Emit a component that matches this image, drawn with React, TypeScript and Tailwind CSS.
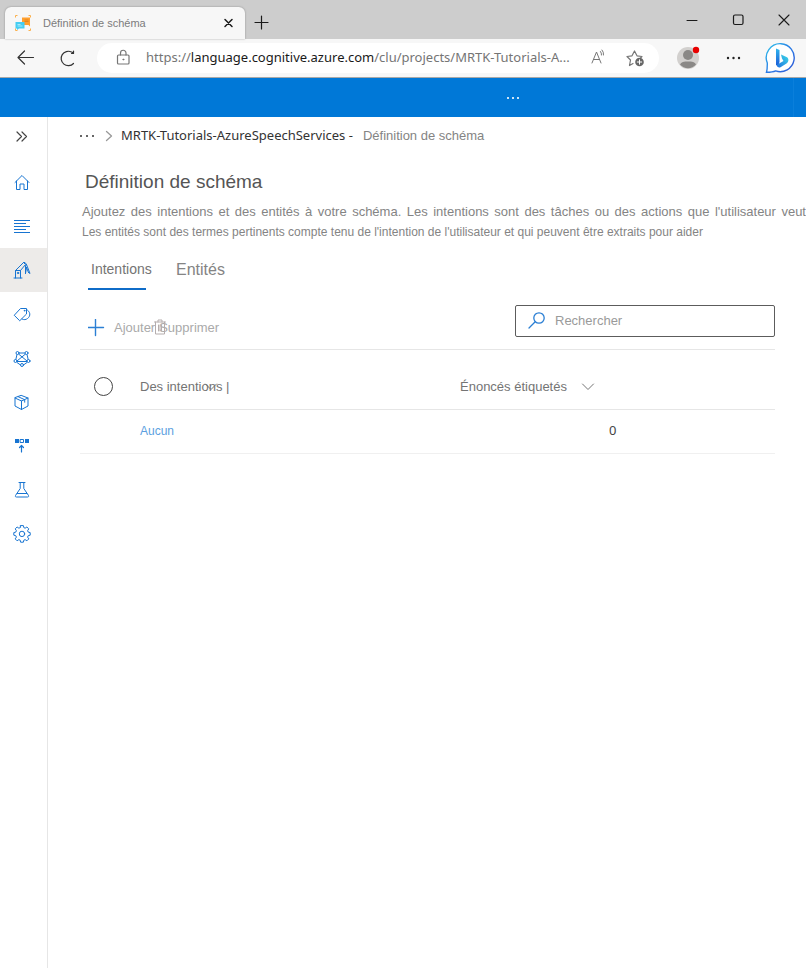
import React from "react";

const ui = "font-['Liberation_Sans',Arial,sans-serif]";
const segoe = "font-['Noto_Sans','Open_Sans',sans-serif]";

type IconProps = { className?: string; children: React.ReactNode; box?: string };

function Icon({ className = "size-[18px]", children, box = "0 0 18 18" }: IconProps) {
  return (
    <svg
      viewBox={box}
      className={`shrink-0 ${className}`}
      fill="none"
      stroke="currentColor"
      strokeWidth="1"
      strokeLinecap="round"
      strokeLinejoin="round"
      aria-hidden="true"
    >
      {children}
    </svg>
  );
}

function TabFavicon() {
  return (
    <svg viewBox="0 0 16 16" className="size-4 shrink-0" aria-hidden="true">
      <path d="M.5 2.500v-2h2M13.500.500h2v2M.500 13.500v2h2M13.500 15.500h2v-2" fill="none" stroke="#fbb04c" />
      <path d="M7 2.500h8v9l-1.500-1.500H7z" fill="#ff9f2e" />
      <path d="M9.500 5h4M9.500 6.500h4" stroke="#d97a12" strokeWidth=".7" />
      <path d="M.5 7h9v6.500H4l-2 1.500v-1.500H.5z" fill="#45cdf2" />
      <path d="M2.500 9.500h3M2.500 11h5" stroke="#c2f1fc" strokeWidth=".8" />
    </svg>
  );
}

function BingLogo() {
  return (
    <svg viewBox="0 0 32 32" className="size-8 shrink-0" aria-hidden="true">
      <defs>
        <linearGradient id="bingRing" x1="0" y1="0" x2="1" y2="1">
          <stop offset="0" stopColor="#2fc4ea" />
          <stop offset=".5" stopColor="#2b7de6" />
          <stop offset="1" stopColor="#2f55d4" />
        </linearGradient>
        <linearGradient id="bingStem" x1="0" y1="0" x2="0" y2="1">
          <stop offset="0" stopColor="#2fb6ee" />
          <stop offset="1" stopColor="#1a56d6" />
        </linearGradient>
        <linearGradient id="bingBowl" x1="0" y1="1" x2="1" y2="0">
          <stop offset="0" stopColor="#1f6fe0" />
          <stop offset="1" stopColor="#3ddbe8" />
        </linearGradient>
      </defs>
      <path
        d="M17 1.700a14 14 0 1 1-5.400 27.200C9 30.200 6 30.300 2.500 30.300 3.400 27.500 3.300 25 3.300 21A14 14 0 0 1 17 1.700z"
        fill="#fff"
        stroke="url(#bingRing)"
        strokeWidth="1.400"
      />
      <path d="M12 6.500l3.500 1.500v12l-1.500 4.500-2-2z" fill="url(#bingStem)" />
      <path d="M17 12.500l5.500 2.500c2.600 1.200 2.500 4.800 0 6.500l-6 3.700c-1.500.8-3.500 0-4-2.200l7-4-1.500-2.500z" fill="url(#bingBowl)" />
    </svg>
  );
}

const navItems = [
  {
    label: "Accueil",
    icon: <path d="M2 9.500l7-7 7 7M3.500 8v8.500H7v-5.500h4v5.500h3.500V8" />,
  },
  {
    label: "Projets",
    icon: (
      <path d="M1 3.500h16M1 6.500h12M1 9.500h16M1 12.500h12M1 15.500h16" strokeLinecap="butt" strokeWidth="1.200" />
    ),
  },
  {
    label: "Définition de schéma",
    active: true,
    icon: (
      <>
        <path d="M1 17h8M2.500 17V9.500h5V17M2.500 9.500l1.500-1.500L10.500 1.500l2 2L7.500 9.500M10.500 1.500h1.500l1.500 2-1 1.500M13.500 3.500L17 12.500l-1.500-1M12.500 5v7.500M13.500 6.500l2 5M13.500 6.500l-1 6" />
        <circle cx="5" cy="12" r=".7" />
      </>
    ),
  },
  {
    label: "Étiquetage des données",
    icon: (
      <>
        <path d="M1.500 10L7.500 3.500h6V9L7 15.500z" />
        <path d="M13.500 4.500c4 2 4.500 6.500 1 9-1.500 1.200-3.500 1.700-5.500 .5" />
        <circle cx="11.500" cy="5.700" r=".4" />
      </>
    ),
  },
  {
    label: "Travaux de formation",
    icon: (
      <>
        <path d="M6 4h6M4 5.500L2.700 11M5.500 5L14 12M12.500 5L4 12M14 5.500l1.300 5.500M4 13.500l3.500 2.500M14 13.500L10.500 16M4 12.500h10" />
        <circle cx="4.500" cy="4" r="1.500" fill="#fff" />
        <circle cx="13.500" cy="4" r="1.500" fill="#fff" />
        <circle cx="2.500" cy="12" r="1.500" fill="#fff" />
        <circle cx="15.500" cy="12" r="1.500" fill="#fff" />
        <circle cx="9" cy="16" r="1.500" fill="#fff" />
      </>
    ),
  },
  {
    label: "Performances du modèle",
    icon: (
      <path d="M8.500 2.500L15 5v8l-6.500 3.500L2 13V5zM2 5l6.500 3L15 5M8.500 8v8.500M5.200 3.700l6.500 3v2.500" />
    ),
  },
  {
    label: "Déploiement",
    icon: (
      <>
        <path d="M2 2h4v4H2zM12 2h4v4h-4z" fill="currentColor" stroke="none" />
        <path d="M7.500 2.500h3v3h-3z" />
        <path d="M8.500 15V8.500M6.500 10.500l2-2 2 2" strokeWidth="1.200" />
      </>
    ),
  },
  {
    label: "Test des déploiements",
    icon: <path d="M6 1.500h6M7.200 1.500v6L2.500 14.500c-.4 1 0 1.500 1 1.500h11c1 0 1.400-.5 1-1.500l-4.700-7v-6M4.200 12.500h9.600" />,
  },
  {
    label: "Paramètres du projet",
    icon: (
      <>
        <path d="M7.600.6h2.800l.4 2 1.300.6 1.800-1.200 1.900 1.900-1.200 1.800.6 1.400 2 .5v2.600l-2 .5-.6 1.400 1.200 1.800-1.900 1.900-1.800-1.200-1.300.6-.4 2H7.600l-.4-2-1.300-.6-1.800 1.200-1.900-1.900 1.200-1.800-.6-1.400-2-.5V7.600l2-.5.600-1.400-1.200-1.800 1.900-1.900 1.800 1.200 1.300-.6z" />
        <circle cx="9" cy="8.900" r="2.700" />
      </>
    ),
  },
];

function BrowserChrome() {
  return (
    <header>
      <div className="flex h-[39px] bg-[#cdcdcd] pl-[5px]">
        <div className="mt-[7px] flex w-60 items-center rounded-t-md bg-[#f7f7f7] px-2.5 shadow-[0_0_2px_rgba(0,0,0,0.35)]">
          <TabFavicon />
          <span className={`ml-3 flex-1 text-[11px] text-[#7c7c7c] ${ui}`}>Définition de schéma</span>
          <button type="button" aria-label="Fermer l'onglet" className="text-[#1a1a1a]">
            <Icon className="size-3" box="0 0 12 12">
              <path d="M2 2.500l7 7M9 2.500l-7 7" strokeWidth="1.500" />
            </Icon>
          </button>
        </div>
        <button type="button" aria-label="Nouvel onglet" className="mt-1.5 ml-2 text-[#1a1a1a]">
          <Icon>
            <path d="M8.500 2v13M2 8.500h13" strokeWidth="1.200" />
          </Icon>
        </button>
        <div className="ml-auto flex items-center gap-7 pr-[13px] text-[#1a1a1a]">
          <button type="button" aria-label="Réduire">
            <Icon>
              <path d="M4 9.500h10" />
            </Icon>
          </button>
          <button type="button" aria-label="Agrandir">
            <Icon>
              <rect x="4.500" y="4" width="9.500" height="9.500" rx="1.500" strokeWidth="1.200" />
            </Icon>
          </button>
          <button type="button" aria-label="Fermer">
            <Icon>
              <path d="M4 4l10 10M14 4L4 14" strokeWidth="1.100" />
            </Icon>
          </button>
        </div>
      </div>

      <div className="flex h-[39px] items-center border-b border-[#a8a8a8] bg-[#f7f7f7] pr-2.5 pl-4">
        <button type="button" aria-label="Retour" className="text-[#333]">
          <Icon className="size-5" box="0 0 20 20">
            <path d="M2 9.500h15.500M8.500 3L2 9.500 8.500 16" strokeWidth="1.200" />
          </Icon>
        </button>
        <button type="button" aria-label="Actualiser" className="ml-[22px] text-[#333]">
          <Icon className="size-5" box="0 0 20 20">
            <path d="M15.500 15.500a7.200 7.200 0 1 1-2-11.500l2 1M15.500 3v2.500h-2" strokeWidth="1.200" />
          </Icon>
        </button>
        <div className="ml-[19px] flex h-[30px] min-w-0 flex-1 items-center rounded-full bg-white pr-3.5 pl-[17px] text-[#767676]">
          <Icon>
            <rect x="3.500" y="6" width="11.500" height="9" rx="1" strokeWidth="1.200" />
            <path d="M6.500 6V4a2.700 2.700 0 0 1 5.500 0V6" strokeWidth="1.200" />
            <circle cx="9.300" cy="10.500" r=".5" fill="currentColor" />
          </Icon>
          <div
            role="textbox"
            aria-label="Barre d'adresse"
            className={`ml-3.5 flex-1 overflow-hidden text-[13px] whitespace-nowrap text-[#757575] ${segoe}`}
          >
            https://<span className="text-[#1a1a1a]">language.cognitive.azure.com</span>
            /clu/projects/MRTK-Tutorials-A...
          </div>
          <button type="button" aria-label="Lecture à voix haute" className="mr-[18px]">
            <Icon>
              <path d="M3 14L7.500 3l4.500 11M4.500 10.500h6M11.500 2.500a5 5 0 0 1 1 3.500M13 1a6 6 0 0 1 1.500 5" />
            </Icon>
          </button>
          <button type="button" aria-label="Ajouter aux favoris">
            <Icon className="size-5" box="0 0 20 20">
              <path d="M8 15.500l-3.500 2 1-5.500L2 8.500l5-.7L9.500 3l2.500 4.800 5 .7-1.500 1.500" strokeWidth="1.200" />
              <circle cx="14.500" cy="14" r="4.300" fill="#666" stroke="none" />
              <path d="M14.500 11.800v4.400M12.300 14h4.400" stroke="#fff" />
            </Icon>
          </button>
        </div>
        <button type="button" aria-label="Profil" className="ml-[18px]">
          <svg viewBox="0 0 24 24" className="size-6" aria-hidden="true">
            <circle cx="11" cy="12" r="11" fill="#d2d0ce" />
            <circle cx="11" cy="9" r="5" fill="#8a8886" />
            <path d="M3 18.500c1-2.500 4-3 8-3s7 .5 8 3a10.500 10.500 0 0 1-16 0z" fill="#8a8886" />
            <circle cx="19" cy="4" r="3.200" fill="#e80000" />
          </svg>
        </button>
        <button type="button" aria-label="Plus" className="ml-6 text-[#222]">
          <svg viewBox="0 0 18 18" className="size-[18px]" fill="currentColor" aria-hidden="true">
            <circle cx="3" cy="9" r="1.200" />
            <circle cx="8.500" cy="9" r="1.200" />
            <circle cx="14" cy="9" r="1.200" />
          </svg>
        </button>
        <button type="button" aria-label="Bing" className="ml-[21px]">
          <BingLogo />
        </button>
      </div>
    </header>
  );
}

function Sidebar() {
  return (
    <nav aria-label="Navigation" className="w-12 shrink-0 border-r border-[#e6e6e6]">
      <button type="button" aria-label="Développer" className="flex h-10 w-full items-center pl-[13px] text-[#444]">
        <Icon>
          <path d="M4 4L8.500 8.500 4 13M9 4L13.500 8.500 9 13" strokeWidth="1.200" />
        </Icon>
      </button>
      <ul className="mt-[3px]">
        {navItems.map((item) => (
          <li key={item.label}>
            <a
              href="#"
              aria-label={item.label}
              className={`flex h-11 items-center pl-[13px] text-[#1774d1] ${item.active ? "bg-[#edebe9]" : ""}`}
            >
              <Icon>{item.icon}</Icon>
            </a>
          </li>
        ))}
      </ul>
    </nav>
  );
}

function Chevron() {
  return (
    <Icon className="h-2 w-3.5" box="0 0 14 8">
      <path d="M1.500 1L7 6.500 12.500 1" />
    </Icon>
  );
}

export default function App() {
  return (
    <div className={`flex min-h-screen flex-col overflow-hidden bg-white ${ui}`}>
      <BrowserChrome />
      <div className="flex h-[39px] justify-end bg-[#0078d7]">
        <button type="button" aria-label="Plus d'options" className="mr-[274px] flex items-center gap-[3px]">
          <span className="size-0.5 bg-white/80" />
          <span className="size-0.5 bg-white/80" />
          <span className="size-0.5 bg-white/80" />
        </button>
        <div className="w-[13px] border-l border-[#0a7fdb]" />
      </div>

      <div className="flex flex-1">
        <Sidebar />
        <main className="min-w-0 flex-1 pl-8">
          <nav aria-label="Fil d'Ariane" className="flex h-[38px] items-center text-[13px]">
            <button type="button" aria-label="Afficher tout" className="flex gap-1">
              <span className="size-0.5 bg-[#666]" />
              <span className="size-0.5 bg-[#666]" />
              <span className="size-0.5 bg-[#666]" />
            </button>
            <span className="ml-[11px] text-[#999]">
              <Icon className="h-3 w-2" box="0 0 8 12">
                <path d="M1.500 1.500L6.500 6l-5 4.500" strokeWidth="1.300" />
              </Icon>
            </span>
            <a href="#" className={`ml-2 text-[#333] ${segoe}`}>
              MRTK-Tutorials-AzureSpeechServices -
            </a>
            <span className="ml-2.5 text-[#848484]">Définition de schéma</span>
          </nav>

          <h1 className="mt-[13px] pl-[5px] text-[19px] leading-7 text-[#555]">Définition de schéma</h1>
          <div className="mt-1.5 pl-0.5 text-[12px] leading-5 text-[#848484]">
            <p className="text-[13px] [text-align-last:justify]">
              Ajoutez des intentions et des entités à votre schéma. Les intentions sont des tâches ou des actions que
              l'utilisateur veut
            </p>
            <p>
              Les entités sont des termes pertinents compte tenu de l'intention de l'utilisateur et qui peuvent être
              extraits pour aider
            </p>
          </div>

          <div role="tablist" className="mt-2 flex gap-6 pl-2 text-[#848484]">
            <button
              type="button"
              role="tab"
              aria-selected="true"
              className="h-10 w-[58px] border-b-2 border-[#0f6cc8] pl-[3px] text-left text-[14px] whitespace-nowrap text-[#747474]"
            >
              Intentions
            </button>
            <button type="button" role="tab" aria-selected="false" className="h-10 pl-1.5 text-[16px]">
              Entités
            </button>
          </div>

          <div className="mr-[31px] flex h-[60px] items-center border-b border-[#e6e6e6] pl-2">
            <div className="relative flex items-center pt-4 text-[13px] text-[#aaa]">
              <button type="button" className="flex items-center gap-2">
                <span className="text-[#2b7fd4]">
                  <Icon>
                    <path d="M7.500 .5v16M0 8.500h15.500" strokeWidth="1.400" />
                  </Icon>
                </span>
                Ajouter
              </button>
              <button type="button" className="ml-1">
                Supprimer
              </button>
              <span className="absolute top-[17px] left-[66px] text-[#b5adad]">
                <Icon className="h-4 w-3" box="0 0 12 16">
                  <path d="M.500 3h11M4 3V1h4v2M1.500 3v12h9V3M4.500 6v6M6 6v6M7.500 6v6" />
                </Icon>
              </span>
            </div>
            <label className="mt-[3px] ml-auto flex h-8 w-[260px] items-center rounded-[2px] border border-[#5c5c5c] pl-3">
              <span className="text-[#2b7fd4]">
                <Icon>
                  <circle cx="11" cy="6" r="5.200" strokeWidth="1.300" />
                  <path d="M7.200 9.800L1 16" strokeWidth="1.300" />
                </Icon>
              </span>
              <input
                type="search"
                aria-label="Rechercher"
                placeholder="Rechercher"
                className="ml-[9px] min-w-0 flex-1 text-[13px] outline-none placeholder:text-[#9a9a9a]"
              />
            </label>
          </div>

          <div className="mt-[15px] mr-[31px]">
            <table className="w-full table-fixed text-left text-[13px]">
              <thead>
                <tr className="h-11 border-b border-[#e6e6e6] text-[#747474]">
                  <th className="w-[60px] pl-3.5 font-normal">
                    <input
                      type="radio"
                      aria-label="Tout sélectionner"
                      className="block size-[19px] appearance-none rounded-full border border-[#444]"
                    />
                  </th>
                  <th className="w-80 font-normal">
                    <button type="button" className="relative">
                      Des intentions |
                      <span className="absolute top-1.5 left-16">
                        <Chevron />
                      </span>
                    </button>
                  </th>
                  <th className="font-normal">
                    <button type="button" className="flex items-center gap-3.5">
                      Énoncés étiquetés
                      <Chevron />
                    </button>
                  </th>
                </tr>
              </thead>
              <tbody>
                <tr className="h-11 border-b border-[#f0f0f0]">
                  <td />
                  <td>
                    <a href="#" className="text-[12px] text-[#5c9fe0]">
                      Aucun
                    </a>
                  </td>
                  <td className={`pl-[149px] text-[#444] ${segoe}`}>0</td>
                </tr>
              </tbody>
            </table>
          </div>
        </main>
      </div>
    </div>
  );
}
